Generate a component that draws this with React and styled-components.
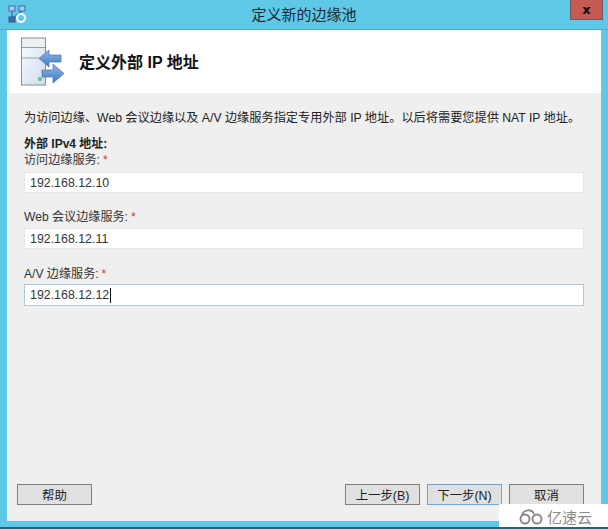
import React from "react";
import styled, { createGlobalStyle } from "styled-components";

const Global = createGlobalStyle`
  html, body { margin: 0; padding: 0; background: #5fc8e8; }
  body { font-family: "Liberation Sans", "Noto Sans CJK SC", sans-serif; }
`;
const Win = styled.div`
  position: relative; width: 608px; height: 529px; overflow: hidden;
  background: #5fc8e8; display: flex; flex-direction: column; box-sizing: border-box;
  border-bottom: 2px solid #2f5f78;
`;
const TitleBar = styled.div`
  height: 29px; flex: none; display: flex; align-items: center; position: relative;
  border-bottom: 1px solid #58a9c8;
`;
const AppIcon = styled.svg`width: 18px; height: 18px; margin-left: 8px; margin-top: -2px;`;
const Title = styled.div`
  position: absolute; left: 0; right: 0; top: 5px; text-align: center;
  font-size: 15px; line-height: 20px; color: #1c2a30;
`;
const Close = styled.div`
  position: absolute; top: 0; left: 570px; width: 33px; height: 20px; box-sizing: border-box;
  background: #c75a52; border: 1px solid #6c5a5a; border-top: none;
  display: flex; align-items: center; justify-content: center;
  font: bold 13px/1 "DejaVu Sans", sans-serif; color: #111;
`;
const Panel = styled.div`
  flex: 1; margin: 0 7px 6px; background: #efefef; display: flex; flex-direction: column; min-height: 0;
`;
const Header = styled.div`
  height: 63px; flex: none; background: #fff; display: flex; align-items: center; padding-left: 14px; box-sizing: border-box;
`;
const HeaderIcon = styled.svg`width: 44px; height: 50px; flex: none;`;
const HeaderTitle = styled.div`
  margin-left: 14px; font-size: 16px; font-weight: 700; color: #111; margin-top: -2px;
`;
const Body = styled.div`
  flex: 1; display: flex; flex-direction: column; padding: 17px 17px 0 17px; min-height: 0;
`;
const Intro = styled.div`font-size: 12.2px; line-height: 16px; color: #222; white-space: nowrap;`;
const Section = styled.div`font-size: 12px; line-height: 16px; font-weight: 700; color: #222; margin-top: 10px;`;
const Label = styled.div`
  font-size: 12.1px; line-height: 16px; color: #333; margin-top: ${p => p.$top}px;
`;
const Star = styled.span`color: #d33; margin-left: 3px;`;
const Field = styled.div`
  height: ${p => (p.$focus ? 22 : 21)}px; margin-top: ${p => p.$gap}px; box-sizing: border-box; width: 560px; background: #fff;
  border: 1px solid ${p => (p.$focus ? "#b4c8dc" : "#e6e6e6")};
  padding-left: 5px; display: flex; align-items: center;
  font-size: 12.4px; color: #333; flex: none;
`;
const Caret = styled.span`display: inline-block; width: 1px; height: 15px; background: #111; margin-left: 1px;`;
const Footer = styled.div`
  margin: auto 0 0 -7px; display: flex; padding: 0 0 16px;
`;
const Btn = styled.div`
  width: 75px; height: 21px; box-sizing: border-box; margin-left: ${p => p.$left || 0}px; flex: none;
  background: #e0e0e0; border: 1px solid ${p => (p.$focus ? "#66a8dc" : "#7e7e7e")};
  display: flex; align-items: center; justify-content: center;
  font-size: 12.4px; color: #222;
`;
const Watermark = styled.div`
  position: absolute; left: 499px; top: 504px; width: 109px; height: 25px; background: #fff;
  display: flex; align-items: center; gap: 3px; padding-left: 19px; box-sizing: border-box;
  font-size: 15px; color: #8a8a8a;
`;

const Server = () => (
  <HeaderIcon viewBox="0 0 44 50">
    <defs>
      <linearGradient id="s" x1="0" y1="0" x2="1" y2="1">
        <stop offset="0" stopColor="#fafcfe" /><stop offset="1" stopColor="#cfdcf0" />
      </linearGradient>
      <linearGradient id="a" x1="0" y1="0" x2="0" y2="1">
        <stop offset="0" stopColor="#8fb8e8" /><stop offset="1" stopColor="#3f78c0" />
      </linearGradient>
    </defs>
    <rect x="0.5" y="1" width="24" height="47" fill="url(#s)" stroke="#8a8f94" />
    <rect x="1" y="2" width="23" height="9" fill="#eef1f4" />
    <line x1="1" y1="10.5" x2="24" y2="10.5" stroke="#9a9ea2" />
    <line x1="1" y1="21" x2="24" y2="21" stroke="#9a9ea2" />
    <circle cx="19" cy="42" r="2" fill="#5cc08a" />
    <path d="M18 21.5 L28 13 V18 H40 V25 H28 V30 Z" fill="url(#a)" stroke="#4a78a8" strokeWidth="0.7" />
    <path d="M21 33 H32 V27 L43 36.5 L32 46 V40 H21 Z" fill="url(#a)" stroke="#4a78a8" strokeWidth="0.7" />
  </HeaderIcon>
);

const Tool = () => (
  <AppIcon viewBox="0 0 18 18">
    <rect x="1" y="1" width="6" height="5" fill="#a8cdf0" stroke="#3a6ea8" />
    <rect x="11" y="1" width="6" height="5" fill="#a8cdf0" stroke="#3a6ea8" />
    <rect x="1" y="12" width="6" height="5" fill="#3a6ea8" stroke="#2c5a90" />
    <path d="M4 6 V12 M14 6 L6 12" stroke="#2c5a90" fill="none" />
    <circle cx="13" cy="13" r="4" fill="none" stroke="#fff" strokeWidth="2" />
  </AppIcon>
);

export default function App() {
  return (
    <Win>
      <Global />
      <TitleBar>
        <Tool />
        <Title>定义新的边缘池</Title>
        <Close>x</Close>
      </TitleBar>
      <Panel>
        <Header>
          <Server />
          <HeaderTitle>定义外部 IP 地址</HeaderTitle>
        </Header>
        <Body>
          <Intro>为访问边缘、Web 会议边缘以及 A/V 边缘服务指定专用外部 IP 地址。以后将需要您提供 NAT IP 地址。</Intro>
          <Section>外部 IPv4 地址:</Section>
          <Label $top={0}>访问边缘服务:<Star>*</Star></Label>
          <Field $gap={4}>192.168.12.10</Field>
          <Label $top={16}>Web 会议边缘服务:<Star>*</Star></Label>
          <Field $gap={3}>192.168.12.11</Field>
          <Label $top={17}>A/V 边缘服务:<Star>*</Star></Label>
          <Field $gap={2} $focus>192.168.12.12<Caret /></Field>
          <Footer>
            <Btn>帮助</Btn>
            <Btn $left={253}>上一步(B)</Btn>
            <Btn $left={7} $focus>下一步(N)</Btn>
            <Btn $left={7}>取消</Btn>
          </Footer>
        </Body>
      </Panel>
      <Watermark>
        <svg width="26" height="16" viewBox="0 0 26 16" fill="none" stroke="#8a8a8a" strokeWidth="2">
          <circle cx="7" cy="10" r="4.5" />
          <circle cx="19" cy="10" r="4.5" />
          <path d="M4 6 C6 0 14 0 16 5" />
        </svg>
        <span>亿速云</span>
      </Watermark>
    </Win>
  );
}
